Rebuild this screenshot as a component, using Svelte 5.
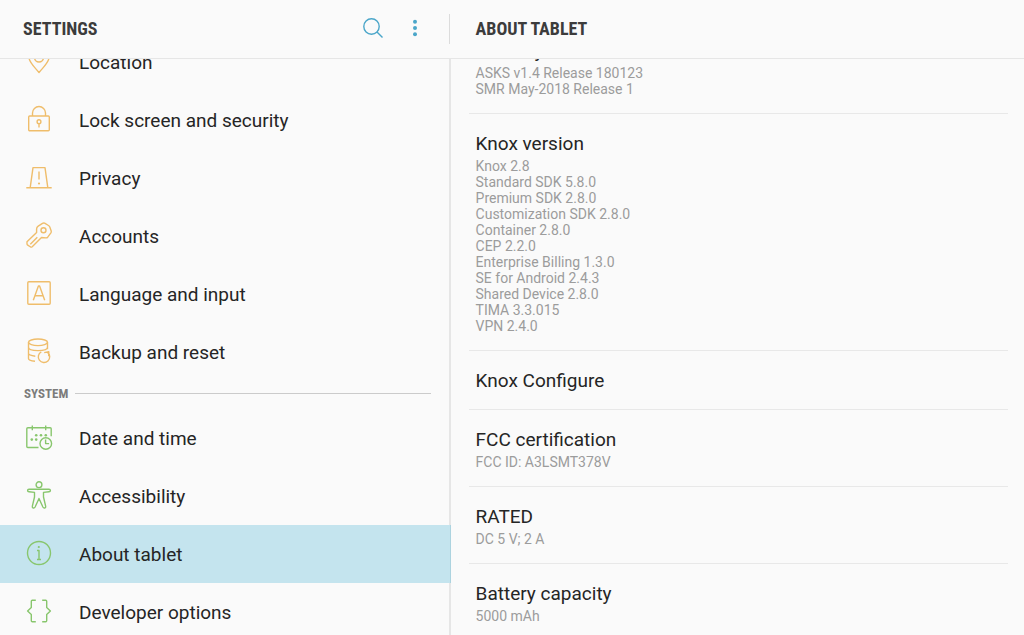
<script>
  const personal = [
    { label: 'Location', icon: 'location' },
    { label: 'Lock screen and security', icon: 'lock' },
    { label: 'Privacy', icon: 'privacy' },
    { label: 'Accounts', icon: 'key' },
    { label: 'Language and input', icon: 'language' },
    { label: 'Backup and reset', icon: 'backup' },
  ];
  const system = [
    { label: 'Date and time', icon: 'date' },
    { label: 'Accessibility', icon: 'person' },
    { label: 'About tablet', icon: 'info' },
    { label: 'Developer options', icon: 'braces' },
  ];
  let selected = $state('About tablet');

  const details = [
    { title: 'Security software version', lines: ['ASKS v1.4 Release 180123', 'SMR May-2018 Release 1'] },
    {
      title: 'Knox version',
      lines: [
        'Knox 2.8',
        'Standard SDK 5.8.0',
        'Premium SDK 2.8.0',
        'Customization SDK 2.8.0',
        'Container 2.8.0',
        'CEP 2.2.0',
        'Enterprise Billing 1.3.0',
        'SE for Android 2.4.3',
        'Shared Device 2.8.0',
        'TIMA 3.3.015',
        'VPN 2.4.0',
      ],
    },
    { title: 'Knox Configure', lines: [] },
    { title: 'FCC certification', lines: ['FCC ID: A3LSMT378V'] },
    { title: 'RATED', lines: ['DC 5 V; 2 A'] },
    { title: 'Battery capacity', lines: ['5000 mAh'] },
  ];
</script>

{#snippet glyph(name)}
  <svg class="glyph" viewBox="0 0 30 30" aria-hidden="true">
    {#if name === 'location'}
      <path d="M15 26.5C11.500 22 5 16.500 5 11.500a10 10 0 0 1 20 0C25 16.500 18.500 22 15 26.500Z" />
      <circle cx="15" cy="11.500" r="4.500" />
    {:else if name === 'lock'}
      <rect x="4.700" y="12" width="20.600" height="14.800" rx="1" />
      <path d="M8.500 12V9a6.500 6.500 0 0 1 13 0v3" />
      <circle cx="15" cy="17.700" r="1.900" />
      <path d="M15 19.600v3.800" />
    {:else if name === 'privacy'}
      <path d="M2.300 25.700h25.400M6.200 25.700 9 5.600h12l2.800 20.100M15 9.500v8" />
      <circle class="solid" cx="15" cy="21.500" r="1.100" />
    {:else if name === 'key'}
      <path d="M14.200 6.200 18.500 3.400Q19.500 2.800 20.600 3.200L24.500 5.500Q25.300 6 25.800 7L27.200 11Q27.500 12 26.900 12.900L23.700 17.200Q23 18 22 17.900L17.500 17.500 8.200 26.700Q7.500 27.300 6.600 27L3.800 25.200Q3 24.600 3 23.700V21.800L12.600 12.500V9Q12.600 7.300 14.200 6.200Z" />
      <circle cx="19.500" cy="10.300" r="2.500" />
      <path d="M6.300 24.200 13.300 17.300" />
    {:else if name === 'language'}
      <rect x="3.800" y="3.800" width="22.400" height="22.400" rx="1" />
      <path d="M9.300 22.200 14.400 8h1.200l5.100 14.200M11 17.700h8" />
    {:else if name === 'backup'}
      <ellipse cx="14" cy="6.300" rx="9.500" ry="3.300" />
      <path d="M4.500 6.300v16.200q0 2.100 6.500 2.800M23.500 6.300v7M4.500 11.300c0 2.700 5 3.300 9.500 3.300s9.500-.600 9.500-3.300M4.500 17.300c0 1.800 2.700 2.500 6.800 2.900" />
      <path d="M17.300 15.800a5.700 5.700 0 1 0 6.300.6M20.200 16.600 24.800 15.800 24.700 20.300" />
    {:else if name === 'date'}
      <path d="M14.500 25.500H3.800q-1 0-1-1V6.700q0-1 1-1h22.400q1 0 1 1v7.500M8.300 3.500v4.700M21.700 3.500v4.700" />
      {#each [[12.200, 13.200], [17, 13.200], [21.800, 13.200], [7.800, 17.600], [12.200, 17.600]] as [x, y]}
        <circle class="solid" cx={x} cy={y} r="1.300" />
      {/each}
      <circle cx="21.800" cy="21.500" r="5.800" />
      <path d="M21.600 17.600v4h3.500" />
    {:else if name === 'person'}
      <circle cx="15" cy="4.700" r="2.900" />
      <path d="M5 9.200H25q1.400 0 1.400 1.300T25 11.800L19.500 12.400V17L21.700 26.300Q21.900 27.800 20.700 28T18.900 27L15 18.500 11.100 27Q10.500 28.200 9.300 28T8.300 26.300L10.500 17V12.400L5 11.800Q3.600 11.700 3.600 10.500T5 9.200Z" />
    {:else if name === 'info'}
      <circle cx="15" cy="15" r="11.500" />
      <path d="M13 12.500h2v9M13 21.500h4" />
      <circle class="solid" cx="14.800" cy="9" r="1.100" />
    {:else if name === 'braces'}
      <path d="M11.800 4.300H8.300q-1 0-1 1v6.200L3.600 15l3.700 3.500v6.200q0 1 1 1h3.500M18.200 4.300h3.500q1 0 1 1v6.200L26.400 15l-3.700 3.500v6.200q0 1-1 1h-3.500" />
    {/if}
  </svg>
{/snippet}

{#snippet row(item)}
  <li>
    <a
      class="row"
      class:selected={selected === item.label}
      href="#{item.icon}"
      aria-current={selected === item.label ? 'page' : undefined}
      onclick={() => (selected = item.label)}
    >
      {@render glyph(item.icon)}
      <span>{item.label}</span>
    </a>
  </li>
{/snippet}

<div class="settings">
  <header class="bar menu-bar">
    <h1>SETTINGS</h1>
    <button type="button" aria-label="Search">
      <svg class="tool" viewBox="0 0 24 24" aria-hidden="true">
        <circle cx="10.500" cy="10.500" r="7.700" />
        <path d="M16 16 21.500 21.500" />
      </svg>
    </button>
    <button type="button" aria-label="More options">
      <svg class="tool" viewBox="0 0 24 24" aria-hidden="true">
        <circle class="solid" cx="12" cy="5.700" r="2" />
        <circle class="solid" cx="12" cy="12" r="2" />
        <circle class="solid" cx="12" cy="18.300" r="2" />
      </svg>
    </button>
  </header>
  <header class="bar detail-bar"><h2>ABOUT TABLET</h2></header>

  <nav class="pane" aria-label="Settings">
    <ul class="group personal">
      {#each personal as item}{@render row(item)}{/each}
    </ul>
    <h3>SYSTEM</h3>
    <ul class="group system">
      {#each system as item}{@render row(item)}{/each}
    </ul>
  </nav>

  <main class="pane">
    <ul class="details">
      {#each details as item}
        <li class:single={item.lines.length === 0}>
          <h4>{item.title}</h4>
          {#each item.lines as line}<p>{line}</p>{/each}
        </li>
      {/each}
    </ul>
  </main>
</div>

<style>
  :global(body) {
    margin: 0;
    background: #fafafa;
  }
  .settings {
    display: grid;
    grid-template-columns: 44% minmax(0, 1fr);
    grid-template-rows: auto minmax(0, 1fr);
    height: 100vh;
    color: #252525;
    font-family: Roboto, sans-serif;
    background: #fafafa;
  }
  h1, h2, h3, h4, p, ul {
    margin: 0;
    padding: 0;
    font-weight: 400;
  }
  ul {
    list-style: none;
  }
  .bar {
    display: flex;
    align-items: center;
    box-sizing: border-box;
    height: 59px;
    border-bottom: 1px solid #e6e6e6;
  }
  .menu-bar {
    padding: 0 14px 0 23px;
  }
  .menu-bar::after {
    content: '';
    width: 1px;
    height: 30px;
    margin: 0 -13px 0 13px;
    background: #dcdcdc;
  }
  .detail-bar {
    padding-left: 25px;
  }
  h1, h2 {
    flex: 1;
    color: #3c3c3c;
    font: 700 18px/24px 'Roboto Condensed', Roboto, sans-serif;
  }
  button {
    display: grid;
    place-items: center;
    width: 42px;
    height: 42px;
    padding: 0 0 2px;
    border: 0;
    background: none;
  }
  .tool {
    width: 24px;
    height: 24px;
    fill: none;
    stroke: #4ba6c9;
    stroke-width: 1.4;
  }
  .tool .solid {
    fill: #4ba6c9;
    stroke: none;
  }
  .pane {
    overflow: hidden auto;
    scrollbar-width: none;
  }
  nav {
    box-sizing: border-box;
    background: linear-gradient(#e6e6e6, #e6e6e6) right / 2px 100% no-repeat;
  }
  .personal {
    margin-top: -26px;
    --accent: #efbd6b;
  }
  .system {
    --accent: #88c66d;
  }
  .row {
    display: flex;
    align-items: center;
    gap: 25px;
    box-sizing: border-box;
    height: 58px;
    padding: 0 0 2px 24px;
    color: inherit;
    font-size: 19px;
    line-height: 26px;
    text-decoration: none;
  }
  .row span {
    padding-top: 4px;
  }
  .selected {
    background: #c4e4ee;
    border-right: 1px solid #acd3df;
  }
  .glyph {
    flex: none;
    width: 30px;
    height: 30px;
    fill: none;
    stroke: var(--accent);
    stroke-width: 1.4;
    stroke-linejoin: round;
  }
  .glyph .solid {
    fill: var(--accent);
    stroke: none;
  }
  h3 {
    display: flex;
    align-items: center;
    gap: 7px;
    box-sizing: border-box;
    height: 28px;
    padding: 0 20px 3px 24px;
    color: #7c7c7c;
    font: 700 13px/16px 'Roboto Condensed', Roboto, sans-serif;
  }
  h3::after {
    content: '';
    flex: 1;
    height: 1px;
    background: #cbcbcb;
  }
  .details {
    margin: -38px 16px 0 18px;
  }
  .details li {
    padding: 17px 7px 16px;
    border-bottom: 1px solid #e8e8e8;
  }
  .details .single {
    padding-bottom: 14px;
  }
  h4 {
    margin-bottom: 1px;
    font-size: 19px;
    line-height: 26px;
  }
  p {
    color: #9c9c9c;
    font-size: 14px;
    line-height: 16px;
  }
</style>
